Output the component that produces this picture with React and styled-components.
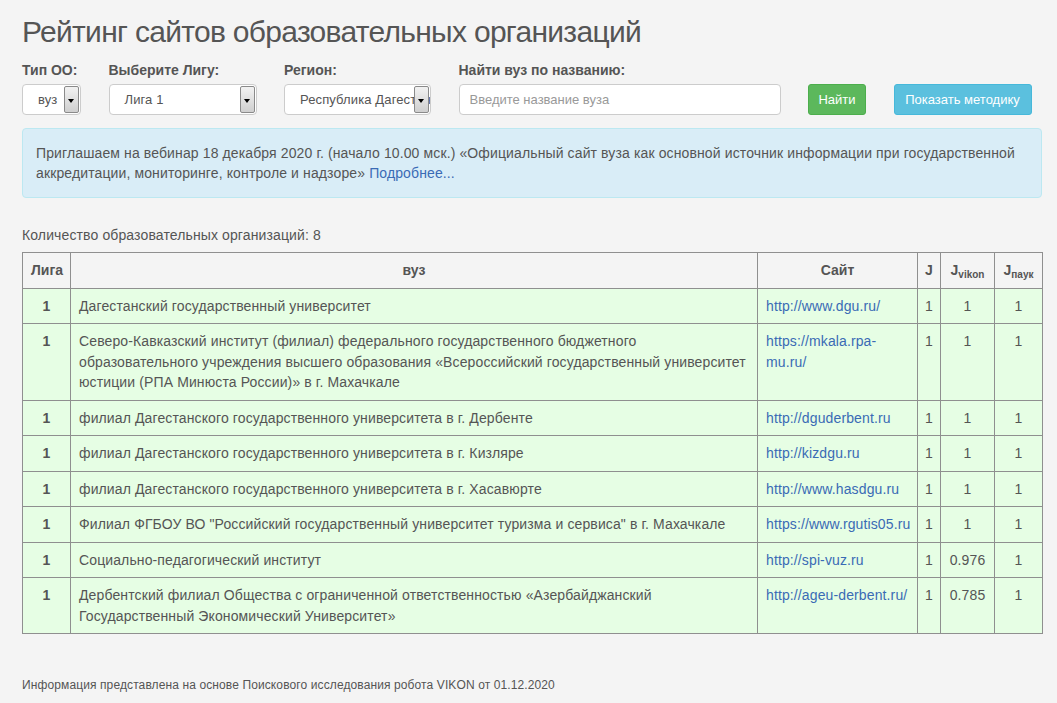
import React from "react";
import styled, { createGlobalStyle } from "styled-components";

const Global = createGlobalStyle`
  body {
    margin: 0;
    background: #f4f4f4;
    font-family: "Liberation Sans", Arial, sans-serif;
    font-size: 14px;
    line-height: 20px;
    letter-spacing: 0.12px;
    color: #555;
  }
`;

const Page = styled.div`
  width: 1020px;
  padding: 15px 0 0 22px;
`;

const Title = styled.h1`
  margin: 0;
  font-size: 30px;
  line-height: 33px;
  font-weight: normal;
  letter-spacing: -0.7px;
  color: #555;
`;

const Filters = styled.div`
  display: flex;
  align-items: flex-end;
  gap: 27.5px;
  margin-top: 12px;
`;

const Group = styled.div`
  display: flex;
  flex-direction: column;
  width: ${(p) => p.$w}px;
`;

const Label = styled.label`
  font-weight: bold;
  letter-spacing: 0;
  margin-bottom: 4px;
  color: #555;
  white-space: nowrap;
`;

const Select = styled.div`
  position: relative;
  height: 31px;
  box-sizing: border-box;
  border: 1px solid #ccc;
  border-radius: 4px;
  background: #fff;
  padding: 0 18px 0 15px;
  font-size: 13px;
  line-height: 29px;
  color: #555;
  white-space: nowrap;
  overflow: hidden;
`;

const Arrow = styled.span`
  position: absolute;
  top: 1px;
  right: 1px;
  bottom: 1px;
  width: 15px;
  box-sizing: border-box;
  border: 1px solid #8a8a8a;
  border-radius: 2px;
  background: linear-gradient(#f2f2f2, #cfcfcf);
  &::after {
    content: "";
    position: absolute;
    left: 3px;
    top: 12px;
    border-left: 3.5px solid transparent;
    border-right: 3.5px solid transparent;
    border-top: 4px solid #000;
  }
`;

const Input = styled.input`
  height: 31px;
  box-sizing: border-box;
  border: 1px solid #ccc;
  border-radius: 4px;
  background: #fff;
  padding: 0 10px;
  font-family: inherit;
  font-size: 13px;
  color: #555;
  &::placeholder {
    color: #999;
  }
`;

const Button = styled.button`
  width: ${(p) => p.$w}px;
  height: 31px;
  padding: 0;
  border-radius: 3px;
  border: 1px solid ${(p) => (p.$kind === "info" ? "#46b8da" : "#4cae4c")};
  background: ${(p) => (p.$kind === "info" ? "#5bc0de" : "#5cb85c")};
  color: #fff;
  font-family: inherit;
  font-size: 13px;
  white-space: nowrap;
`;

const Alert = styled.div`
  margin-top: 13px;
  padding: 14px 13px;
  background: #d9edf7;
  border: 1px solid #bce8f1;
  border-radius: 4px;
  color: #555;
`;

const Link = styled.a`
  color: #3a6bb5;
  text-decoration: none;
`;

const Count = styled.p`
  margin: 27px 0 7px;
`;

const Table = styled.table`
  width: 1020px;
  border-collapse: collapse;
  table-layout: fixed;
`;

const Th = styled.th`
  border: 1px solid #8f8f8f;
  padding: 7px ${(p) => (p.$narrow ? 2 : 8)}px;
  line-height: 20.5px;
  font-weight: bold;
  letter-spacing: 0;
  text-align: center;
  vertical-align: middle;
  color: #555;
  white-space: nowrap;
`;

const Sub = styled.sub`
  font-size: 10px;
  line-height: 0;
  vertical-align: -3px;
`;

const Row = styled.tr`
  background: #e6fee4;
`;

const Td = styled.td`
  border: 1px solid #8f8f8f;
  padding: 7px ${(p) => (p.$narrow ? 2 : 8)}px;
  line-height: 20.5px;
  vertical-align: top;
  text-align: ${(p) => (p.$center ? "center" : "left")};
  font-weight: ${(p) => (p.$bold ? "bold" : "normal")};
  color: #555;
`;

const Footer = styled.p`
  margin: 43px 0 0;
  font-size: 12px;
  line-height: 17px;
  letter-spacing: 0.11px;
`;

const rows = [
  ["Дагестанский государственный университет", "http://www.dgu.ru/", "1", "1", "1"],
  [
    "Северо-Кавказский институт (филиал) федерального государственного бюджетного образовательного учреждения высшего образования «Всероссийский государственный университет юстиции (РПА Минюста России)» в г. Махачкале",
    "https://mkala.rpa-mu.ru/",
    "1",
    "1",
    "1",
  ],
  ["филиал Дагестанского государственного университета в г. Дербенте", "http://dguderbent.ru", "1", "1", "1"],
  ["филиал Дагестанского государственного университета в г. Кизляре", "http://kizdgu.ru", "1", "1", "1"],
  ["филиал Дагестанского государственного университета в г. Хасавюрте", "http://www.hasdgu.ru", "1", "1", "1"],
  [
    "Филиал ФГБОУ ВО \"Российский государственный университет туризма и сервиса\" в г. Махачкале",
    "https://www.rgutis05.ru",
    "1",
    "1",
    "1",
  ],
  ["Социально-педагогический институт", "http://spi-vuz.ru", "1", "0.976", "1"],
  [
    "Дербентский филиал Общества с ограниченной ответственностью «Азербайджанский Государственный Экономический Университет»",
    "http://ageu-derbent.ru/",
    "1",
    "0.785",
    "1",
  ],
];

export default function App() {
  return (
    <Page>
      <Global />
      <Title>Рейтинг сайтов образовательных организаций</Title>
      <Filters>
        <Group $w={59}>
          <Label>Тип ОО:</Label>
          <Select>
            вуз
            <Arrow />
          </Select>
        </Group>
        <Group $w={148}>
          <Label>Выберите Лигу:</Label>
          <Select>
            Лига 1
            <Arrow />
          </Select>
        </Group>
        <Group $w={147}>
          <Label>Регион:</Label>
          <Select>
            Республика Дагестан
            <Arrow />
          </Select>
        </Group>
        <Group $w={322}>
          <Label>Найти вуз по названию:</Label>
          <Input placeholder="Введите название вуза" />
        </Group>
        <Button $w={58}>Найти</Button>
        <Button $w={138} $kind="info">Показать методику</Button>
      </Filters>
      <Alert>
        Приглашаем на вебинар 18 декабря 2020 г. (начало 10.00 мск.) «Официальный сайт вуза как основной источник
        информации при государственной аккредитации, мониторинге, контроле и надзоре» <Link href="#">Подробнее...</Link>
      </Alert>
      <Count>Количество образовательных организаций: 8</Count>
      <Table>
        <colgroup>
          <col style={{ width: 48 }} />
          <col style={{ width: 687 }} />
          <col style={{ width: 160 }} />
          <col style={{ width: 23 }} />
          <col style={{ width: 54 }} />
          <col style={{ width: 48 }} />
        </colgroup>
        <thead>
          <tr>
            <Th>Лига</Th>
            <Th>вуз</Th>
            <Th>Сайт</Th>
            <Th $narrow>J</Th>
            <Th $narrow>
              J<Sub>vikon</Sub>
            </Th>
            <Th $narrow>
              J<Sub>паук</Sub>
            </Th>
          </tr>
        </thead>
        <tbody>
          {rows.map((r, i) => (
            <Row key={i}>
              <Td $center $bold>1</Td>
              <Td>{r[0]}</Td>
              <Td>
                <Link href="#">{r[1]}</Link>
              </Td>
              <Td $center $narrow>{r[2]}</Td>
              <Td $center $narrow>{r[3]}</Td>
              <Td $center $narrow>{r[4]}</Td>
            </Row>
          ))}
        </tbody>
      </Table>
      <Footer>Информация представлена на основе Поискового исследования робота VIKON от 01.12.2020</Footer>
    </Page>
  );
}
